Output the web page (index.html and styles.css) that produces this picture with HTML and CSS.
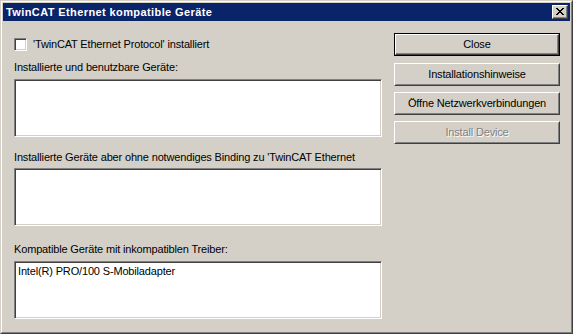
FILE: index.html
```html
<!DOCTYPE html>
<html>
<head>
<meta charset="utf-8">
<link rel="stylesheet" href="styles.css">
</head>
<body>
<div class="win">
  <div class="win-in">
    <div class="titlebar">
      <span class="title">TwinCAT Ethernet kompatible Geräte</span>
      <span class="xbtn"><svg width="8" height="7" viewBox="0 0 8 7"><path d="M0 0h2v1h1v1h2V1h1V0h2v1H7v1H6v1H5v1h1v1h1v1h1v1H6V6H5V5H3v1H2v1H0V6h1V5h1V4h1V3H2V2H1V1H0z" fill="#000"/></svg></span>
    </div>
    <div class="body">
      <div class="left">
        <div class="chkrow"><span class="chk"></span><span>'TwinCAT Ethernet Protocol' installiert</span></div>
        <div class="lbl l1">Installierte und benutzbare Geräte:</div>
        <div class="list"></div>
        <div class="lbl l2">Installierte Geräte aber ohne notwendiges Binding zu 'TwinCAT Ethernet</div>
        <div class="list"></div>
        <div class="lbl l3">Kompatible Geräte mit inkompatiblen Treiber:</div>
        <div class="list"><div class="item">Intel(R) PRO/100 S-Mobiladapter</div></div>
      </div>
      <div class="right">
        <div class="btn def"><div class="btn-in">Close</div></div>
        <div class="btn b2"><div class="btn-in">Installationshinweise</div></div>
        <div class="btn b3"><div class="btn-in">Öffne Netzwerkverbindungen</div></div>
        <div class="btn b3 dis"><div class="btn-in">Install Device</div></div>
      </div>
    </div>
  </div>
</div>
</body>
</html>
```
FILE: styles.css
```css
html, body { margin: 0; padding: 0; }
body {
  width: 573px; height: 334px; overflow: hidden;
  font-family: "Liberation Sans", Arial, sans-serif;
  font-size: 11px; letter-spacing: -0.16px; color: #000; background: #d4d0c8;
}
.win {
  box-sizing: border-box; width: 573px; height: 334px;
  border: 1px solid; border-color: #d4d0c8 #404040 #404040 #d4d0c8;
}
.win-in {
  box-sizing: border-box; height: 100%;
  border: 1px solid; border-color: #fff #808080 #808080 #fff;
  padding: 1px; display: flex; flex-direction: column;
}
.titlebar {
  height: 18px; background: #0a246a; display: flex; align-items: center;
  justify-content: space-between; padding: 0 2px 0 3px;
}
.title { color: #fff; font-weight: bold; font-size: 11px; letter-spacing: 0.4px; }
.xbtn {
  box-sizing: border-box; width: 16px; height: 14px; background: #d4d0c8;
  border: 1px solid; border-color: #fff #404040 #404040 #fff;
  box-shadow: inset -1px -1px 0 #808080;
  display: flex; align-items: center; justify-content: center; padding: 0 1px 1px 0;
}
.xbtn svg { display: block; }
.body { display: flex; padding: 12px 0 0 11px; gap: 12px; }
.left { width: 368px; display: flex; flex-direction: column; }
.chkrow { display: flex; align-items: center; gap: 6px; height: 13px; margin-top: 5px; line-height: 13px; }
.chk {
  box-sizing: border-box; width: 13px; height: 13px; background: #fff;
  border: 1px solid; border-color: #808080 #fff #fff #808080;
  box-shadow: inset 1px 1px 0 #404040, inset -1px -1px 0 #d4d0c8;
}
.lbl { line-height: 13px; height: 13px; white-space: nowrap; }
.l1 { margin-top: 10px; margin-bottom: 5px; }
.l2 { margin-top: 14px; margin-bottom: 4px; }
.l3 { margin-top: 17px; margin-bottom: 5px; }
.list {
  box-sizing: border-box; height: 58px; background: #fff;
  border: 1px solid; border-color: #808080 #fff #fff #808080;
  box-shadow: inset 1px 1px 0 #404040, inset -1px -1px 0 #d4d0c8;
  padding: 3px 3px;
}
.item { line-height: 13px; }
.right { width: 166px; display: flex; flex-direction: column; }
.btn {
  box-sizing: border-box; height: 23px; background: #d4d0c8;
  border: 1px solid; border-color: #fff #404040 #404040 #fff;
}
.btn-in {
  box-sizing: border-box; height: 100%;
  border: 1px solid; border-color: #d4d0c8 #808080 #808080 #d4d0c8;
  display: flex; align-items: center; justify-content: center; line-height: 13px;
}
.btn.def { border: 1px solid #000; margin-top: 0; }
.btn.def .btn-in { border-color: #fff #404040 #404040 #fff; box-shadow: inset -1px -1px 0 #808080; }
.b2 { margin-top: 7px; }
.b3 { margin-top: 6px; }
.dis .btn-in { color: #808080; text-shadow: 1px 1px 0 #fff; }
```
